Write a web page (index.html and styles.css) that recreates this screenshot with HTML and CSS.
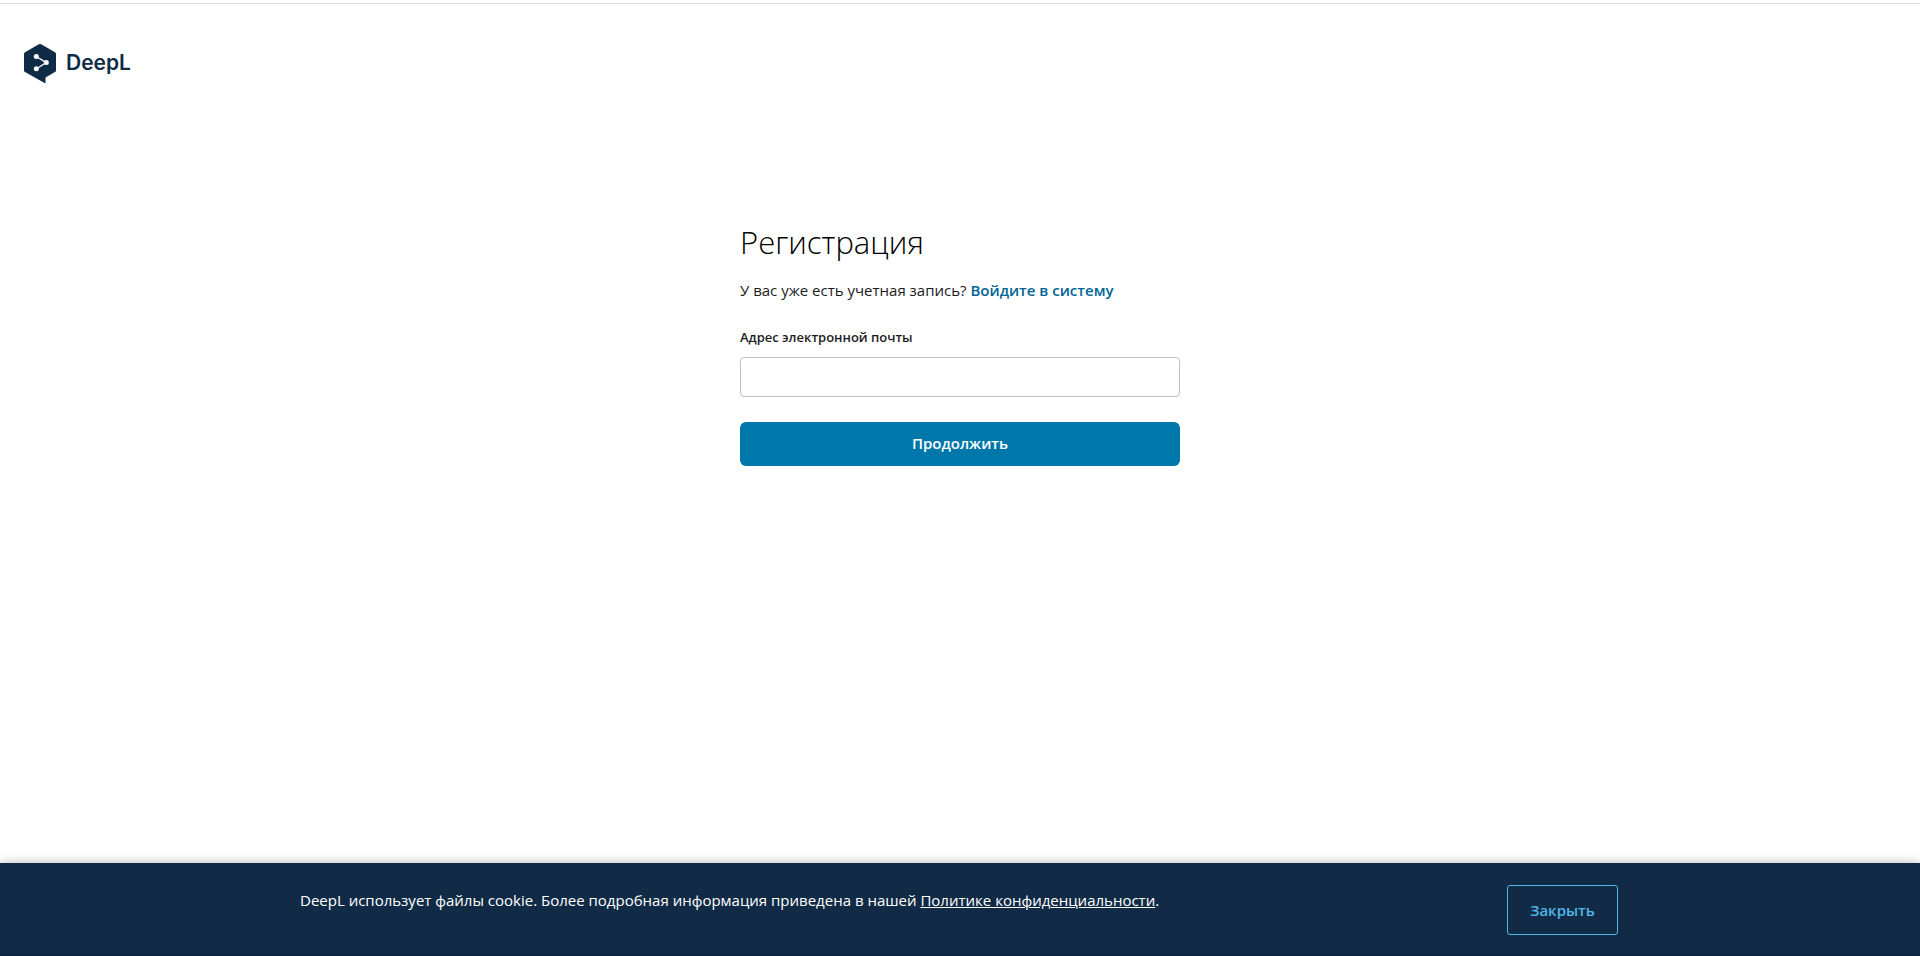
FILE: index.html
```html
<!DOCTYPE html>
<html lang="ru">
<head>
<meta charset="utf-8">
<title>DeepL – Регистрация</title>
<link rel="stylesheet" href="styles.css">
</head>
<body>
<header class="header">
  <a class="logo" href="#" aria-label="DeepL">
    <svg class="logo-mark" viewBox="0 0 32 40" width="32" height="40" aria-hidden="true">
      <path fill="#0f2b46" d="M14.8 .3a2.400 2.400 0 0 1 2.400 0L31 8.200A2 2 0 0 1 32 10V26.400a2 2 0 0 1-1 1.700L21.500 33.500V39.600L1 28.100A2 2 0 0 1 0 26.400V10A2 2 0 0 1 1 8.200Z"/>
      <path fill="none" stroke="#fff" stroke-width="1.300" d="M12.500 12.700L22.400 18.600L12.500 24.700"/>
      <circle fill="#fff" cx="12.300" cy="12.600" r="2.500"/>
      <circle fill="#fff" cx="22.300" cy="18.600" r="2.500"/>
      <circle fill="#fff" cx="12.300" cy="24.800" r="2.500"/>
    </svg>
    <span class="logo-name">DeepL</span>
  </a>
</header>
<main class="main">
  <form class="signup">
    <h1 class="title">Регистрация</h1>
    <p class="hint">У вас уже есть учетная запись? <a class="login" href="#">Войдите в систему</a></p>
    <label class="label" for="email">Адрес электронной почты</label>
    <input class="input" id="email" type="email">
    <button class="submit" type="button">Продолжить</button>
  </form>
</main>
<footer class="cookies">
  <div class="cookies-inner">
    <p class="cookies-text">DeepL использует файлы cookie. Более подробная информация приведена в нашей <a class="policy" href="#">Политике конфиденциальности</a>.</p>
    <button class="close" type="button">Закрыть</button>
  </div>
</footer>
</body>
</html>
```
FILE: styles.css
```css
* { box-sizing: border-box; }
body {
  display: flex;
  flex-direction: column;
  min-height: 100vh;
  margin: 0;
  padding-top: 3px;
  background: #fff;
  color: #1b1c1d;
  font-family: "Open Sans", "Noto Sans", sans-serif;
}
.header {
  border-top: 1px solid #dadada;
  padding: 40px 24px;
}
.logo {
  display: inline-flex;
  align-items: center;
  gap: 10px;
  color: #0f2b46;
  text-decoration: none;
}
.logo-mark { display: block; }
.logo-name {
  padding-bottom: 2px;
  font-family: Inter, sans-serif;
  font-size: 21px;
  font-weight: 600;
  line-height: 28px;
}
.main {
  flex: 1;
  padding: 91px 24px 40px;
}
.signup {
  display: flex;
  flex-direction: column;
  max-width: 440px;
  margin: 0 auto;
}
.title {
  margin: 0;
  color: #000;
  font-size: 31px;
  font-weight: 300;
  line-height: 44px;
}
.hint {
  margin: 14px 0 25px;
  font-size: 15px;
  font-weight: 400;
  line-height: 24px;
}
.login {
  color: #006494;
  font-weight: 600;
  text-decoration: none;
}
.label {
  margin-bottom: 10px;
  font-size: 13px;
  font-weight: 600;
  line-height: 20px;
}
.input {
  height: 40px;
  margin-bottom: 25px;
  border: 1px solid #c2c2c2;
  border-radius: 4px;
  padding: 0 12px;
  background: #fff;
  font: inherit;
}
.submit {
  height: 44px;
  border: 0;
  border-radius: 6px;
  padding-bottom: 3px;
  background: #0077aa;
  color: #fff;
  font: 600 15px "Open Sans", "Noto Sans", sans-serif;
}
.cookies {
  border-bottom: 2px solid #0b2540;
  padding: 22px 24px 19px;
  background: #112b46;
  box-shadow: 0 0 10px rgba(0, 20, 15, 0.3);
  color: #fff;
}
.cookies-inner {
  display: flex;
  align-items: flex-start;
  justify-content: space-between;
  max-width: 1320px;
  margin: 0 auto;
  padding-right: 2px;
}
.cookies-text {
  margin: 3px 0 0;
  font-size: 15px;
  line-height: 24px;
}
.policy { color: #fff; }
.close {
  width: 111px;
  height: 50px;
  border: 1px solid #4fb8e8;
  border-radius: 3px;
  background: transparent;
  color: #4fb8e8;
  font: 600 15px "Open Sans", "Noto Sans", sans-serif;
}
```
